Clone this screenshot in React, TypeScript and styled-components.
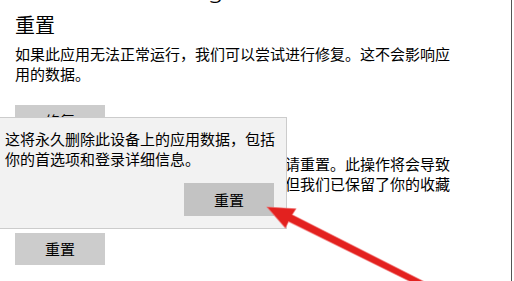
import React from "react";
import styled, { createGlobalStyle } from "styled-components";

const Global = createGlobalStyle`
  html, body { margin: 0; padding: 0; background: #fff; }
  body {
    width: 514px;
    height: 281px;
    overflow: hidden;
    font-family: "Noto Sans CJK SC", "Noto Sans", sans-serif;
    color: #000;
  }
`;

const Page = styled.div`
  position: relative;
  box-sizing: border-box;
  width: 512px;
  height: 281px;
  border-right: 1px solid #555;
  overflow: hidden;
  background: #fff;
`;

const Content = styled.div`
  display: flex;
  flex-direction: column;
  align-items: flex-start;
  padding-left: 15px;
`;

const PrevHeadingClip = styled.div`
  height: 4px;
  overflow: hidden;
  display: flex;
  align-items: flex-end;
  padding-left: 193px;
`;

const PrevHeading = styled.span`
  font-family: "Noto Sans", sans-serif;
  font-size: 26px;
  line-height: 26px;
  font-weight: 300;
  margin-bottom: 4px;
`;

const Title = styled.h2`
  margin: 7px 0 0;
  font-size: 20px;
  line-height: 28px;
  font-weight: 400;
`;

const Paragraph = styled.p<{ $gap: number }>`
  margin: ${(p) => p.$gap}px 0 0;
  font-size: 15px;
  line-height: 20px;
  white-space: nowrap;
`;

const Button = styled.div<{ $gap: number; $tone?: string }>`
  margin-top: ${(p) => p.$gap}px;
  width: 90px;
  height: 32px;
  display: flex;
  align-items: center;
  justify-content: center;
  background: ${(p) => p.$tone ?? "#cccccc"};
  font-size: 15px;
  line-height: 20px;
`;

const Flyout = styled.div`
  position: absolute;
  left: -1px;
  top: 117px;
  box-sizing: border-box;
  width: 288px;
  height: 112px;
  background: #f2f2f2;
  border: 1px solid #cccccc;
  padding: 11px 12px 0 5px;
  display: flex;
  flex-direction: column;
`;

const FlyoutText = styled.p`
  margin: 0;
  font-size: 15px;
  line-height: 20px;
  white-space: nowrap;
`;

const FlyoutButton = styled(Button)`
  align-self: flex-end;
  height: 33px;
`;

const ArrowLayer = styled.svg`
  position: absolute;
  left: 0;
  top: 0;
  pointer-events: none;
`;

export default function App() {
  return (
    <>
      <Global />
      <Page>
        <Content>
          <PrevHeadingClip>
            <PrevHeading>g</PrevHeading>
          </PrevHeadingClip>
          <Title>重置</Title>
          <Paragraph $gap={5}>
            如果此应用无法正常运行，我们可以尝试进行修复。这不会影响应
            <br />
            用的数据。
          </Paragraph>
          <Button $gap={21}>修复</Button>
          <Paragraph $gap={17}>
            如果此应用在修复后仍然无法正常运行，请重置。此操作将会导致
            <br />
            你的设备上的浏览器数据和设置被删除，但我们已保留了你的收藏
            <br />
            夹。
          </Paragraph>
          <Button $gap={19}>重置</Button>
        </Content>
        <Flyout>
          <FlyoutText>
            这将永久删除此设备上的应用数据，包括
            <br />
            你的首选项和登录详细信息。
          </FlyoutText>
          <FlyoutButton $gap={14} $tone="#c3c3c3">
            重置
          </FlyoutButton>
        </Flyout>
        <ArrowLayer width="514" height="281" viewBox="0 0 514 281">
          <polygon
            points="267,207 296,208.8 292.2,214.8 431.3,285.3 428.7,290.7 288.6,221.6 285.4,228"
            fill="#e3211f"
            stroke="#f07070"
            strokeWidth="1.2"
            strokeOpacity="0.55"
            strokeLinejoin="round"
          />
        </ArrowLayer>
      </Page>
    </>
  );
}
